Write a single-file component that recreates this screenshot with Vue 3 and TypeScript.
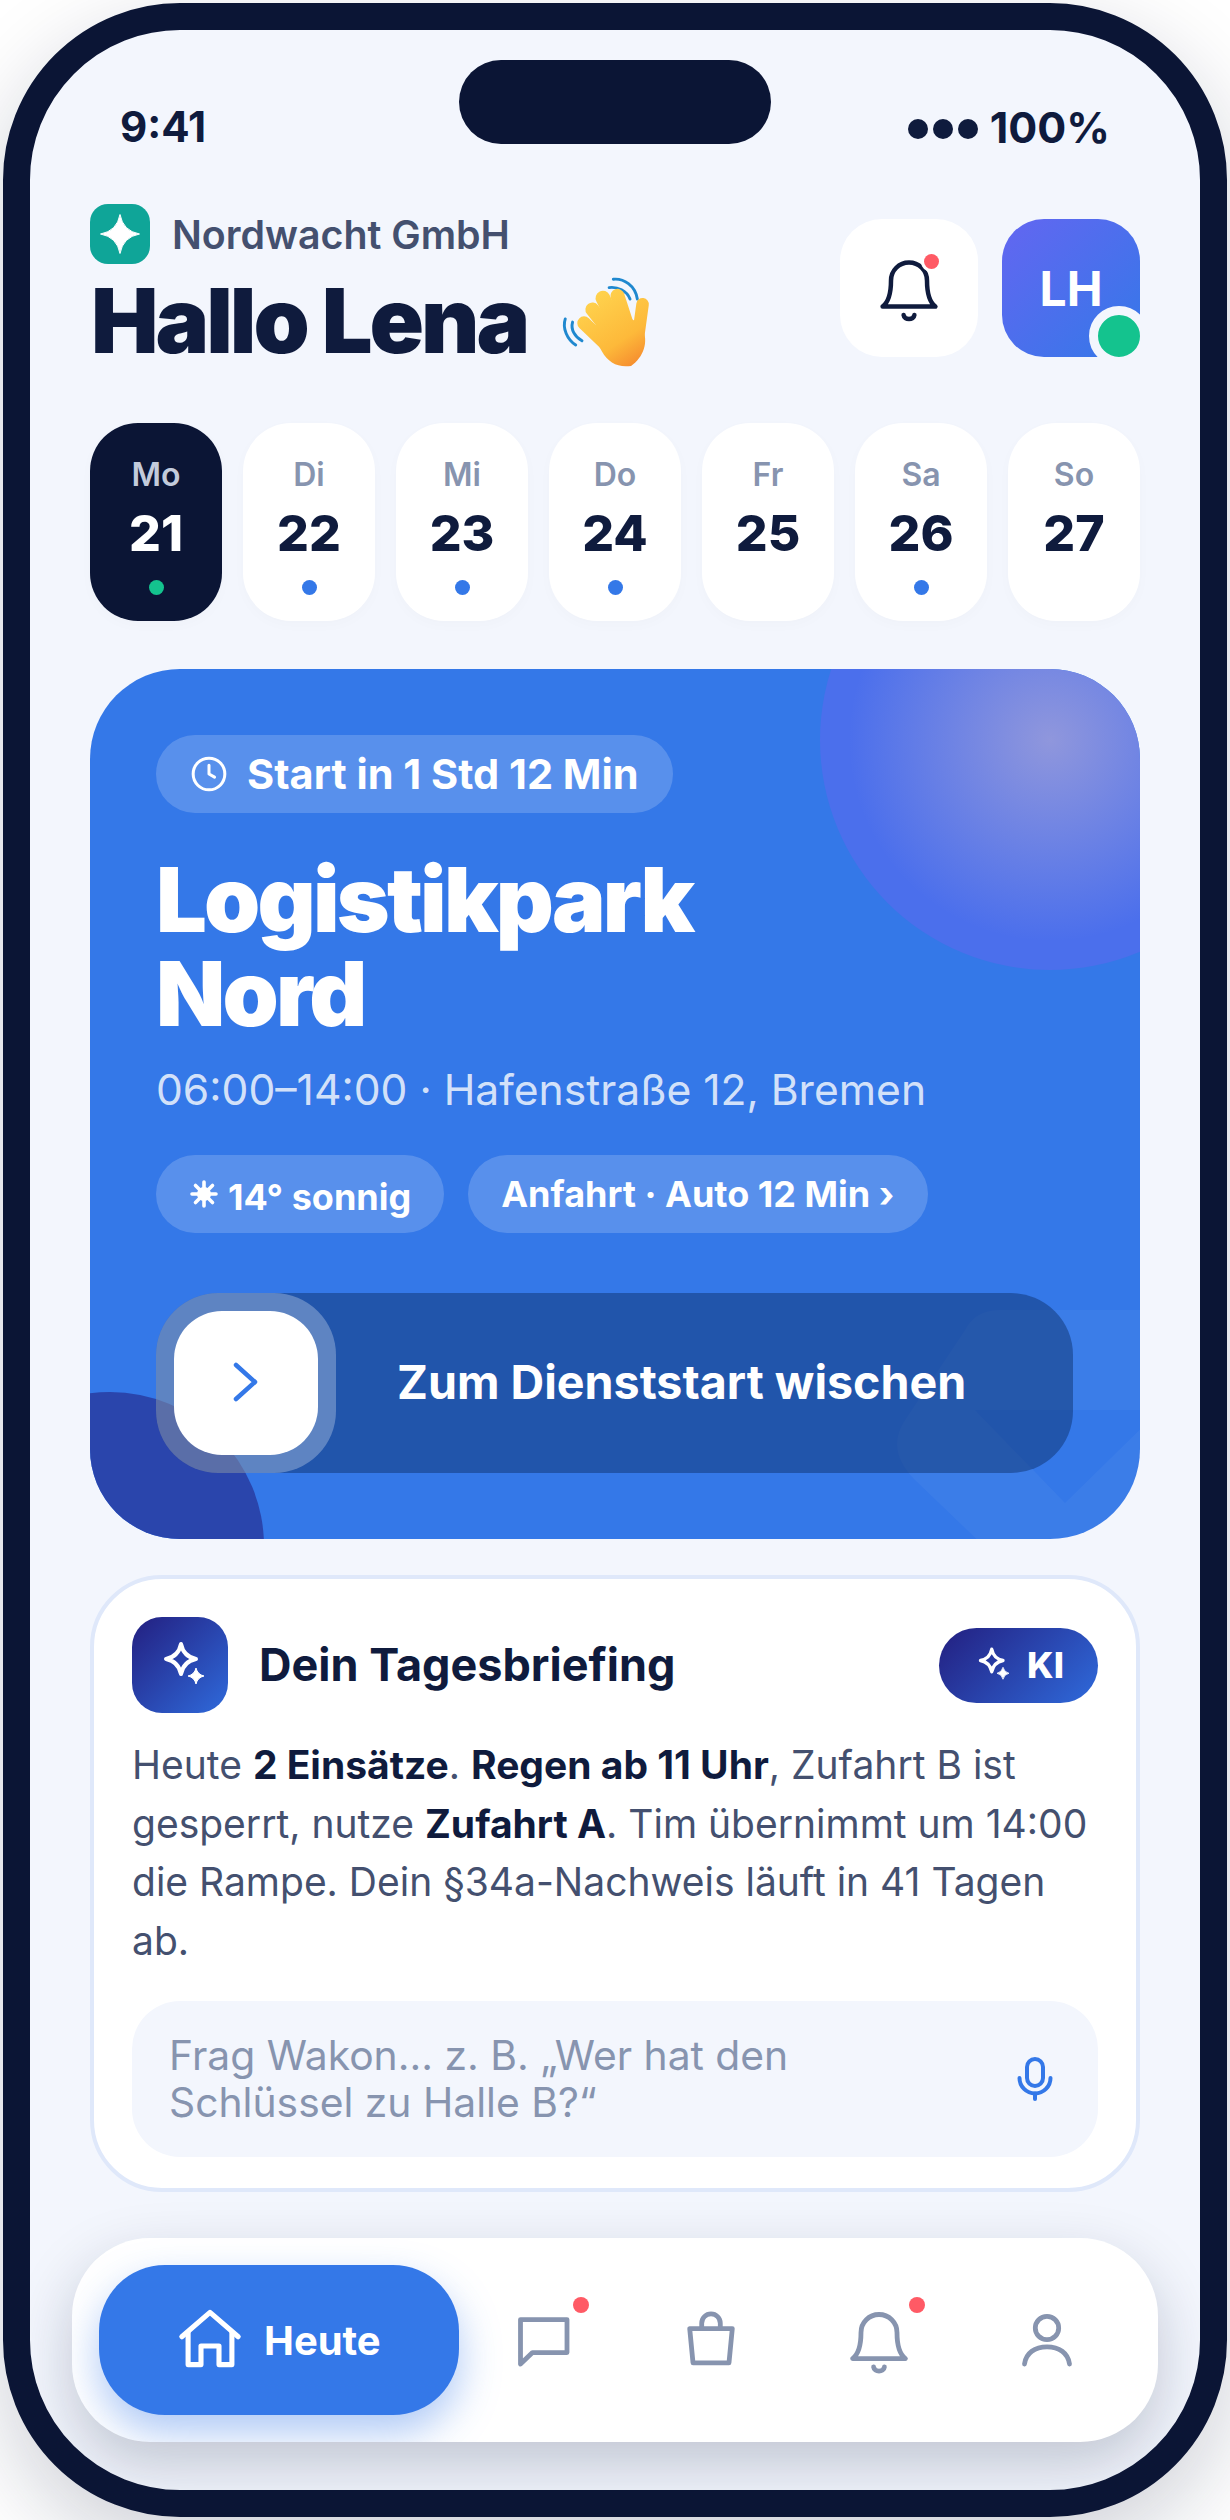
<template>
  <div class="phone">
    <div class="screen">
      <div class="notch"></div>

      <!-- status bar -->
      <div class="status">
        <span>9:41</span>
        <span class="status-right">
          <span class="signal"><i></i><i></i><i></i></span>
          100%
        </span>
      </div>

      <!-- header -->
      <header class="header">
        <div class="hello">
          <div class="brand">
            <span class="brand-logo">
              <svg width="44" height="44" viewBox="0 0 44 44"><path d="M22 2.5Q25 19 41.5 22 25 25 22 41.5 19 25 2.5 22 19 19 22 2.5z" fill="#fff" stroke="#fff" stroke-linejoin="round" /></svg>
            </span>
            <span class="brand-name">Nordwacht GmbH</span>
          </div>
          <h1 class="title">
            <span>Hallo Lena</span>
            <svg class="wave" width="94" height="94" viewBox="0 0 90 90" fill="none">
              <defs>
                <linearGradient id="hand" x1="30" y1="20" x2="75" y2="88" gradientUnits="userSpaceOnUse">
                  <stop offset="0" stop-color="#ffd34e" />
                  <stop offset="0.65" stop-color="#fdb93a" />
                  <stop offset="1" stop-color="#f58a2e" />
                </linearGradient>
              </defs>
              <g stroke="#1f88cf" stroke-width="2.8" stroke-linecap="round">
                <path d="M52 5c10-1 21 6 23 19" />
                <path d="M48 13c8-1 17 3 20 11" />
                <path d="M6 43c-3 9 2 20 10 25" />
                <path d="M13 46c-2 7 2 14 9 18" />
              </g>
              <g stroke="url(#hand)" stroke-linecap="round">
                <path d="M24 47 48 70" stroke-width="13" />
                <path d="M32 34 54 62" stroke-width="13.5" />
                <path d="M42 23 60 60" stroke-width="14" />
                <path d="M56 21 68 58" stroke-width="13.5" />
                <path d="M80 29 76 58" stroke-width="12" />
              </g>
              <path d="M30 54c8-10 36-22 50-2 6 13 1 28-11 36-12 2-22-3-28-14z" fill="url(#hand)" />
            </svg>
          </h1>
        </div>
        <div class="actions">
          <button class="icon-btn">
            <svg width="72" height="72" viewBox="0 0 24 24" fill="none" stroke="#0f1b3d" stroke-width="1.5" stroke-linecap="round" stroke-linejoin="round">
              <path d="M3.2 18.2c2-1.5 2.8-4.3 2.8-8.7a6 6 0 0 1 12 0c0 4.4.8 7.2 2.8 8.7z" />
              <path d="M10.2 21c.2 1.8 3.4 1.8 3.6 0" />
            </svg>
            <span class="btn-dot"></span>
          </button>
          <div class="avatar">
            LH
            <span class="online"></span>
          </div>
        </div>
      </header>

      <!-- week -->
      <div class="week">
        <div v-for="d in days" :key="d.label" class="day" :class="{ 'day--active': d.active }">
          <span class="day-label">{{ d.label }}</span>
          <span class="day-num">{{ d.num }}</span>
          <span class="day-dot" :class="{ 'day-dot--none': !d.dot }"></span>
        </div>
      </div>

      <!-- next shift -->
      <section class="hero">
        <span class="blob blob--top"></span>
        <span class="blob blob--bottom"></span>
        <svg class="shield" width="280" height="259" viewBox="860 1280 280 259">
          <path fill="#fff" fill-opacity="0.04" fill-rule="evenodd" d="M1000 1310H1160V1600H1040L915 1480Q885 1450 905 1420L965 1330Q975 1310 1000 1310ZM975 1410H1160L1065 1503Z" />
        </svg>

        <div class="hero-body">
          <span class="pill pill--start">
            <svg width="38" height="38" viewBox="0 0 24 24" fill="none" stroke="#fff" stroke-width="1.9" stroke-linecap="round" stroke-linejoin="round">
              <circle cx="12" cy="12" r="10" />
              <path d="M12 6.5V12l3.5 2" />
            </svg>
            Start in 1 Std 12 Min
          </span>
          <h2 class="hero-title">Logistikpark<br />Nord</h2>
          <p class="hero-sub">06:00–14:00 · Hafenstraße 12, Bremen</p>
          <div class="hero-chips">
            <span class="pill pill--sun">
              <svg width="30" height="30" viewBox="0 0 30 30" fill="#fff" stroke="#fff" stroke-width="3.6" stroke-linecap="round">
                <circle cx="15" cy="15" r="7" stroke="none" />
                <path d="M15 3v24M3 15h24M6.5 6.5l17 17M23.5 6.5l-17 17" />
              </svg>
              <span class="sun-text">14° sonnig</span>
            </span>
            <span class="pill pill--route">Anfahrt · Auto 12 Min ›</span>
          </div>
          <div class="swipe">
            <span class="knob-halo">
              <span class="knob">
                <svg width="48" height="48" viewBox="0 0 48 48" fill="none" stroke="#3478e8" stroke-width="4.5" stroke-linecap="round" stroke-linejoin="round">
                  <path d="M14 6 33 23 14 40" />
                </svg>
              </span>
            </span>
            <span class="swipe-text">Zum Dienststart wischen</span>
          </div>
        </div>
      </section>

      <!-- briefing -->
      <section class="brief">
        <div class="brief-head">
          <span class="brief-icon">
            <svg width="48" height="48" viewBox="0 0 48 48" fill="none">
              <path d="M25 3Q27.5 15.5 40 18 27.5 20.5 25 33 22.5 20.5 10 18 22.5 15.5 25 3z" stroke="#fff" stroke-width="4" stroke-linejoin="round" />
              <path d="M40 27Q41.5 33.5 48 35 41.5 36.5 40 43 38.5 36.5 32 35 38.5 33.5 40 27z" fill="#fff" stroke="#fff" stroke-linejoin="round" />
            </svg>
          </span>
          <h3 class="brief-title">Dein Tagesbriefing</h3>
          <span class="ki">
            <svg width="36" height="36" viewBox="0 0 48 48" fill="none">
              <path d="M25 3Q27.5 15.5 40 18 27.5 20.5 25 33 22.5 20.5 10 18 22.5 15.5 25 3z" stroke="#fff" stroke-width="4.5" stroke-linejoin="round" />
              <path d="M40 27Q41.5 33.5 48 35 41.5 36.5 40 43 38.5 36.5 32 35 38.5 33.5 40 27z" fill="#fff" stroke="#fff" stroke-linejoin="round" />
            </svg>
            KI
          </span>
        </div>
        <p class="brief-text">
          Heute <b>2 Einsätze</b>. <b>Regen ab 11 Uhr</b>, Zufahrt B ist gesperrt, nutze <b>Zufahrt A</b>. Tim übernimmt um 14:00 die Rampe. Dein §34a-Nachweis läuft in 41 Tagen ab.
        </p>
        <div class="ask">
          <span class="ask-text">Frag Wakon... z. B. „Wer hat den Schlüssel zu Halle B?“</span>
          <svg class="mic" width="36" height="44" viewBox="0 0 36 44" fill="none" stroke="#3478e8" stroke-width="4" stroke-linecap="round">
            <rect x="10" y="2" width="16" height="27" rx="8" />
            <path d="M2.5 21a15.5 15.5 0 0 0 31 0" />
            <path d="M18 36.5V42" />
          </svg>
        </div>
      </section>

      <!-- tab bar -->
      <nav class="nav">
        <button class="nav-active">
          <svg width="72" height="72" viewBox="0 0 24 24" fill="none" stroke="#fff" stroke-width="1.7" stroke-linecap="round" stroke-linejoin="round">
            <path d="M2.6 10.9 12 2.8l9.4 8.1" />
            <path d="M4.7 9.5v10.7h4.3V14h6v6.2h4.3V9.5" />
          </svg>
          Heute
        </button>
        <button v-for="item in navItems" :key="item.name" class="nav-item">
          <svg width="72" height="72" viewBox="0 0 24 24" fill="none" stroke="#8794af" stroke-width="1.6" stroke-linecap="round" stroke-linejoin="round">
            <path v-for="p in item.paths" :key="p" :d="p" />
          </svg>
          <span v-if="item.dot" class="nav-dot"></span>
        </button>
      </nav>
    </div>
  </div>
</template>

<script setup lang="ts">
interface Day {
  label: string
  num: number
  dot: boolean
  active?: boolean
}

interface NavItem {
  name: string
  paths: string[]
  dot: boolean
}

const days: Day[] = [
  { label: 'Mo', num: 21, dot: true, active: true },
  { label: 'Di', num: 22, dot: true },
  { label: 'Mi', num: 23, dot: true },
  { label: 'Do', num: 24, dot: true },
  { label: 'Fr', num: 25, dot: false },
  { label: 'Sa', num: 26, dot: true },
  { label: 'So', num: 27, dot: false }
]

const navItems: NavItem[] = [
  { name: 'chat', dot: true, paths: ['M4.5 5.2H20v11H8.5L4.5 20z'] },
  { name: 'bag', dot: false, paths: ['M4.9 8.2h14.2L18 19.6H6z', 'M8.9 8V6.4a3.1 3.1 0 0 1 6.2 0V8'] },
  { name: 'bell', dot: true, paths: ['M3.2 18.2c2-1.5 2.8-4.3 2.8-8.7a6 6 0 0 1 12 0c0 4.4.8 7.2 2.8 8.7z', 'M10.2 21c.2 1.8 3.4 1.8 3.6 0'] },
  { name: 'person', dot: false, paths: ['M12 4.1a3.9 3.9 0 1 0 0 7.8 3.9 3.9 0 0 0 0-7.8z', 'M4.5 20c.5-3.7 3.5-5.7 7.5-5.7s7 2 7.5 5.7'] }
]
</script>

<style>
html,
body {
  margin: 0;
  background: #fff;
}
</style>

<style scoped>
.phone {
  box-sizing: border-box;
  width: 1224px;
  height: 2514px;
  margin: 3px;
  border: 27px solid #0b1535;
  border-radius: 177px;
  background: #f3f6fd;
  box-shadow: 0 30px 90px rgba(11, 21, 53, 0.2);
  font-family: Inter, "Noto Sans", sans-serif;
  color: #0f1b3d;
}

.screen {
  position: relative;
  height: 100%;
  padding: 72px 60px 0;
  box-sizing: border-box;
  border-radius: 150px;
  overflow: hidden;
}

.notch {
  position: absolute;
  top: 30px;
  left: 429px;
  width: 312px;
  height: 84px;
  border-radius: 42px;
  background: #0b1535;
}

.status {
  display: flex;
  justify-content: space-between;
  height: 50px;
  padding: 0 30px;
  margin-bottom: 52px;
  font-size: 42px;
  line-height: 50px;
  font-weight: 700;
}

.status-right {
  display: flex;
  align-items: center;
  gap: 12px;
  font-size: 43px;
}

.signal {
  display: flex;
  gap: 5px;
  margin-top: 3px;
}

.signal i {
  width: 20px;
  height: 20px;
  border-radius: 50%;
  background: #0f1b3d;
}

.header {
  display: flex;
  justify-content: space-between;
  height: 153px;
  margin-bottom: 66px;
}

.brand {
  display: flex;
  align-items: center;
  gap: 22px;
  height: 60px;
}

.brand-logo {
  display: flex;
  align-items: center;
  justify-content: center;
  width: 60px;
  height: 60px;
  border-radius: 18px;
  background: #0fa598;
}

.brand-name {
  font-size: 39.3px;
  font-weight: 600;
  color: #44506f;
}

.title {
  display: flex;
  align-items: center;
  gap: 32px;
  margin: 10px 0 0 1px;
  font-size: 90px;
  line-height: 90px;
  font-weight: 900;
  letter-spacing: -3px;
}

.actions {
  display: flex;
  gap: 24px;
  margin-top: 15px;
}

.icon-btn {
  position: relative;
  display: flex;
  align-items: center;
  justify-content: center;
  width: 138px;
  height: 138px;
  padding: 0;
  border: none;
  border-radius: 42px;
  background: #fff;
}

.btn-dot {
  position: absolute;
  top: 35px;
  left: 84px;
  width: 15px;
  height: 15px;
  border-radius: 50%;
  background: #ff5a65;
  box-shadow: 0 0 0 3px #fff;
}

.avatar {
  position: relative;
  display: flex;
  align-items: center;
  justify-content: center;
  width: 138px;
  height: 138px;
  border-radius: 42px;
  background: linear-gradient(135deg, #6366f1, #3478e8);
  color: #fff;
  font-size: 48px;
  font-weight: 700;
}

.online {
  position: absolute;
  right: -9px;
  bottom: -9px;
  width: 42px;
  height: 42px;
  border: 9px solid #f3f6fd;
  border-radius: 50%;
  background: #14c38e;
}

.week {
  display: grid;
  grid-template-columns: repeat(7, 1fr);
  gap: 21px;
  height: 198px;
  margin-bottom: 48px;
}

.day {
  display: flex;
  flex-direction: column;
  align-items: center;
  padding-top: 32px;
  border-radius: 48px;
  background: #fff;
  box-shadow: 0 4px 14px rgba(15, 27, 61, 0.02);
}

.day-label {
  font-size: 32px;
  line-height: 40px;
  font-weight: 600;
  color: #8794af;
}

.day-num {
  margin-top: 8px;
  font-size: 50px;
  line-height: 60px;
  font-weight: 800;
}

.day-dot {
  width: 15px;
  height: 15px;
  margin-top: 17px;
  border-radius: 50%;
  background: #3478e8;
}

.day-dot--none {
  visibility: hidden;
}

.day--active {
  background: #0b1535;
}

.day--active .day-label {
  color: #c3cbdb;
}

.day--active .day-num {
  color: #fff;
}

.day--active .day-dot {
  background: #14c38e;
}

.hero {
  position: relative;
  height: 870px;
  border-radius: 90px;
  background: #3478e8;
  overflow: hidden;
  margin-bottom: 36px;
}

.blob {
  position: absolute;
  border-radius: 50%;
}

.blob--top {
  left: 730px;
  top: -159px;
  width: 460px;
  height: 460px;
  background: radial-gradient(circle, rgba(246, 210, 197, 0.4), rgba(246, 210, 197, 0) 62%), #4b6fec;
}

.blob--bottom {
  left: -134px;
  top: 723px;
  width: 308px;
  height: 308px;
  background: #2a45ac;
}

.shield {
  position: absolute;
  left: 770px;
  top: 611px;
}

.hero-body {
  position: relative;
  padding: 66px;
}

.pill {
  display: inline-flex;
  align-items: center;
  height: 78px;
  box-sizing: border-box;
  border-radius: 39px;
  background: rgba(255, 255, 255, 0.18);
  color: #fff;
  font-weight: 700;
}

.pill--start {
  gap: 19px;
  padding: 0 34px;
  font-size: 41.5px;
}

.hero-title {
  margin: 40px 0 0;
  font-size: 90px;
  line-height: 94px;
  font-weight: 900;
  letter-spacing: -2.8px;
  color: #fff;
}

.hero-sub {
  margin: 24px 0 0;
  font-size: 42.6px;
  line-height: 50px;
  color: rgba(255, 255, 255, 0.8);
}

.hero-chips {
  display: flex;
  gap: 24px;
  margin-top: 40px;
}

.pill--sun {
  gap: 9px;
  padding: 0 33px;
  font-size: 36px;
}

.sun-text {
  position: relative;
  top: 3px;
}

.pill--route {
  padding: 0 34px 0 33px;
  font-size: 36px;
}

.swipe {
  display: flex;
  align-items: center;
  width: 917px;
  height: 180px;
  margin-top: 60px;
  border-radius: 62px;
  background: rgba(5, 32, 80, 0.4);
}

.knob-halo {
  display: flex;
  align-items: center;
  justify-content: center;
  width: 180px;
  height: 180px;
  border-radius: 62px;
  background: rgba(255, 255, 255, 0.28);
}

.knob {
  display: flex;
  align-items: center;
  justify-content: center;
  width: 144px;
  height: 144px;
  border-radius: 48px;
  background: #fff;
}

.swipe-text {
  margin: -2px 0 0 61px;
  font-size: 46.6px;
  font-weight: 700;
  color: #fff;
}

.brief {
  height: 617px;
  box-sizing: border-box;
  padding: 38px;
  border: 4px solid #dfe8fa;
  border-radius: 72px;
  background: #fff;
  margin-bottom: 46px;
}

.brief-head {
  display: flex;
  align-items: center;
  height: 96px;
}

.brief-icon {
  display: flex;
  align-items: center;
  justify-content: center;
  width: 96px;
  height: 96px;
  border-radius: 30px;
  background: linear-gradient(135deg, #231f80, #2f6adb);
}

.brief-title {
  flex: 1;
  margin: -2px 0 0 31px;
  font-size: 45px;
  font-weight: 700;
}

.ki {
  display: flex;
  align-items: center;
  justify-content: center;
  gap: 18px;
  width: 159px;
  height: 75px;
  border-radius: 38px;
  background: linear-gradient(135deg, #231f80, #2f6adb);
  color: #fff;
  font-size: 36px;
  font-weight: 800;
}

.brief-text {
  margin: 23px 0 31px;
  font-size: 39px;
  line-height: 58.5px;
  color: #44506f;
}

.brief-text b {
  font-weight: 700;
  color: #0f1b3d;
}

.ask {
  display: flex;
  align-items: center;
  justify-content: space-between;
  height: 156px;
  box-sizing: border-box;
  padding: 0 45px 0 37px;
  border-radius: 48px;
  background: #f3f6fd;
}

.ask-text {
  width: 700px;
  font-size: 40.8px;
  line-height: 47px;
  color: #8794af;
}

.nav {
  display: flex;
  align-items: center;
  height: 204px;
  box-sizing: border-box;
  margin: 0 -18px;
  padding: 0 27px;
  border-radius: 78px;
  background: #fff;
  box-shadow: 0 24px 60px rgba(15, 27, 61, 0.22);
  overflow: hidden;
}

.nav-active {
  display: flex;
  align-items: center;
  gap: 18px;
  flex: none;
  width: 360px;
  height: 150px;
  padding: 0 0 0 75px;
  box-sizing: border-box;
  border: none;
  border-radius: 66px;
  background: #3478e8;
  box-shadow: 0 18px 40px rgba(52, 120, 232, 0.4);
  color: #fff;
  font-family: inherit;
  font-size: 40px;
  font-weight: 700;
}

.nav-item {
  position: relative;
  flex: 1;
  display: flex;
  align-items: center;
  justify-content: center;
  height: 150px;
  padding: 0;
  border: none;
  background: none;
}

.nav-dot {
  position: absolute;
  left: calc(50% + 30px);
  top: calc(50% - 43px);
  width: 16px;
  height: 16px;
  border-radius: 50%;
  background: #ff5a65;
}
</style>
